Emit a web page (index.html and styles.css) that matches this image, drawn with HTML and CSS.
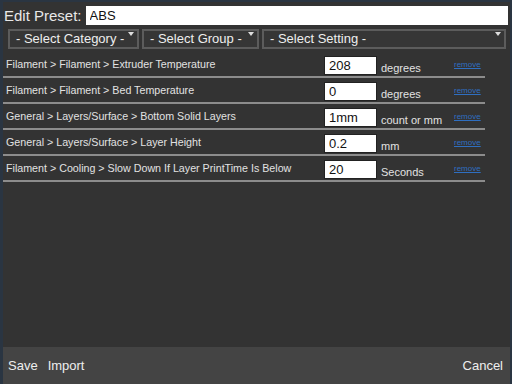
FILE: index.html
```html
<!DOCTYPE html>
<html lang="en">
<head>
  <meta charset="UTF-8">
  <title>Edit Preset</title>
  <link rel="stylesheet" href="styles.css">
</head>
<body>
  <div class="dialog">
    <div class="content">
      <div class="title-row">
        <label for="preset">Edit Preset:</label>
        <input type="text" id="preset" value="ABS" />
      </div>

      <div class="select-row">
        <div class="select sel-category">- Select Category -<span class="arrow"></span></div>
        <div class="select sel-group">- Select Group -<span class="arrow"></span></div>
        <div class="select sel-setting">- Select Setting -<span class="arrow"></span></div>
      </div>

      <div class="rows">
        <div class="row">
          <span class="name">Filament &gt; Filament &gt; Extruder Temperature</span>
          <input type="text" value="208" />
          <span class="unit">degrees</span>
          <a href="#" class="remove">remove</a>
        </div>
        <div class="row">
          <span class="name">Filament &gt; Filament &gt; Bed Temperature</span>
          <input type="text" value="0" />
          <span class="unit">degrees</span>
          <a href="#" class="remove">remove</a>
        </div>
        <div class="row">
          <span class="name">General &gt; Layers/Surface &gt; Bottom Solid Layers</span>
          <input type="text" value="1mm" />
          <span class="unit">count or mm</span>
          <a href="#" class="remove">remove</a>
        </div>
        <div class="row">
          <span class="name">General &gt; Layers/Surface &gt; Layer Height</span>
          <input type="text" value="0.2" />
          <span class="unit">mm</span>
          <a href="#" class="remove">remove</a>
        </div>
        <div class="row">
          <span class="name">Filament &gt; Cooling &gt; Slow Down If Layer PrintTime Is Below</span>
          <input type="text" value="20" />
          <span class="unit">Seconds</span>
          <a href="#" class="remove">remove</a>
        </div>
      </div>
    </div>

    <div class="footer">
      <div class="left-buttons">
        <span class="btn">Save</span>
        <span class="btn">Import</span>
      </div>
      <span class="btn">Cancel</span>
    </div>
  </div>
</body>
</html>
```

FILE: styles.css
```css
html, body {
  margin: 0;
  padding: 0;
}
body {
  background-color: #2a3542;
  font-family: "Liberation Sans", Arial, sans-serif;
  color: #e8e8e8;
  padding: 2px 2px 0 3px;
  height: 100vh;
  box-sizing: border-box;
}
.dialog {
  background-color: #333;
  height: 100%;
  display: flex;
  flex-direction: column;
}
.content {
  flex: 1;
}
.title-row {
  display: flex;
  align-items: center;
  padding: 3px 2px 0 1px;
  height: 20px;
}
.title-row label {
  font-size: 15px;
  margin-right: 4px;
}
.title-row input {
  flex: 1;
  height: 19px;
  box-sizing: border-box;
  border: none;
  padding: 1px 4px;
  font-size: 13px;
  font-family: "Liberation Sans", Arial, sans-serif;
  color: #111;
}
.select-row {
  display: flex;
  gap: 3px;
  padding: 4px 4px 0 5px;
}
.select {
  position: relative;
  height: 20px;
  box-sizing: border-box;
  border: 2px solid #5c5c5c;
  background-color: #363636;
  font-size: 13px;
  line-height: 16px;
  padding-left: 6px;
  color: #eee;
}
.sel-category { width: 131px; }
.sel-group { width: 117px; }
.sel-setting { flex: 1; padding-left: 6px; }
.arrow {
  position: absolute;
  right: 3px;
  top: 1px;
  width: 0;
  height: 0;
  border-left: 3px solid transparent;
  border-right: 3px solid transparent;
  border-top: 4px solid #ddd;
}
.rows {
  width: 482px;
  margin-top: 3px;
}
.row {
  display: grid;
  grid-template-columns: 321px 57px 73px auto;
  align-items: center;
  height: 24px;
  border-bottom: 2px solid #8c8c8c;
}
.name {
  font-size: 10.7px;
  padding-left: 3px;
  color: #e2e2e2;
}
.row input {
  width: 53px;
  height: 19px;
  box-sizing: border-box;
  border: 1px solid #222;
  padding: 0 4px;
  font-size: 13px;
  font-family: "Liberation Sans", Arial, sans-serif;
  color: #111;
  margin-top: 2px;
}
.unit {
  font-size: 11px;
  align-self: end;
  padding-bottom: 2px;
  color: #e2e2e2;
}
.remove {
  font-size: 8px;
  color: #2f6fc1;
  text-decoration: underline;
}
.footer {
  height: 37px;
  background-color: #444;
  display: flex;
  justify-content: space-between;
  align-items: center;
  padding: 0 7px 0 5px;
}
.left-buttons {
  display: flex;
  gap: 10px;
}
.btn {
  font-size: 13px;
  color: #eee;
}
```
